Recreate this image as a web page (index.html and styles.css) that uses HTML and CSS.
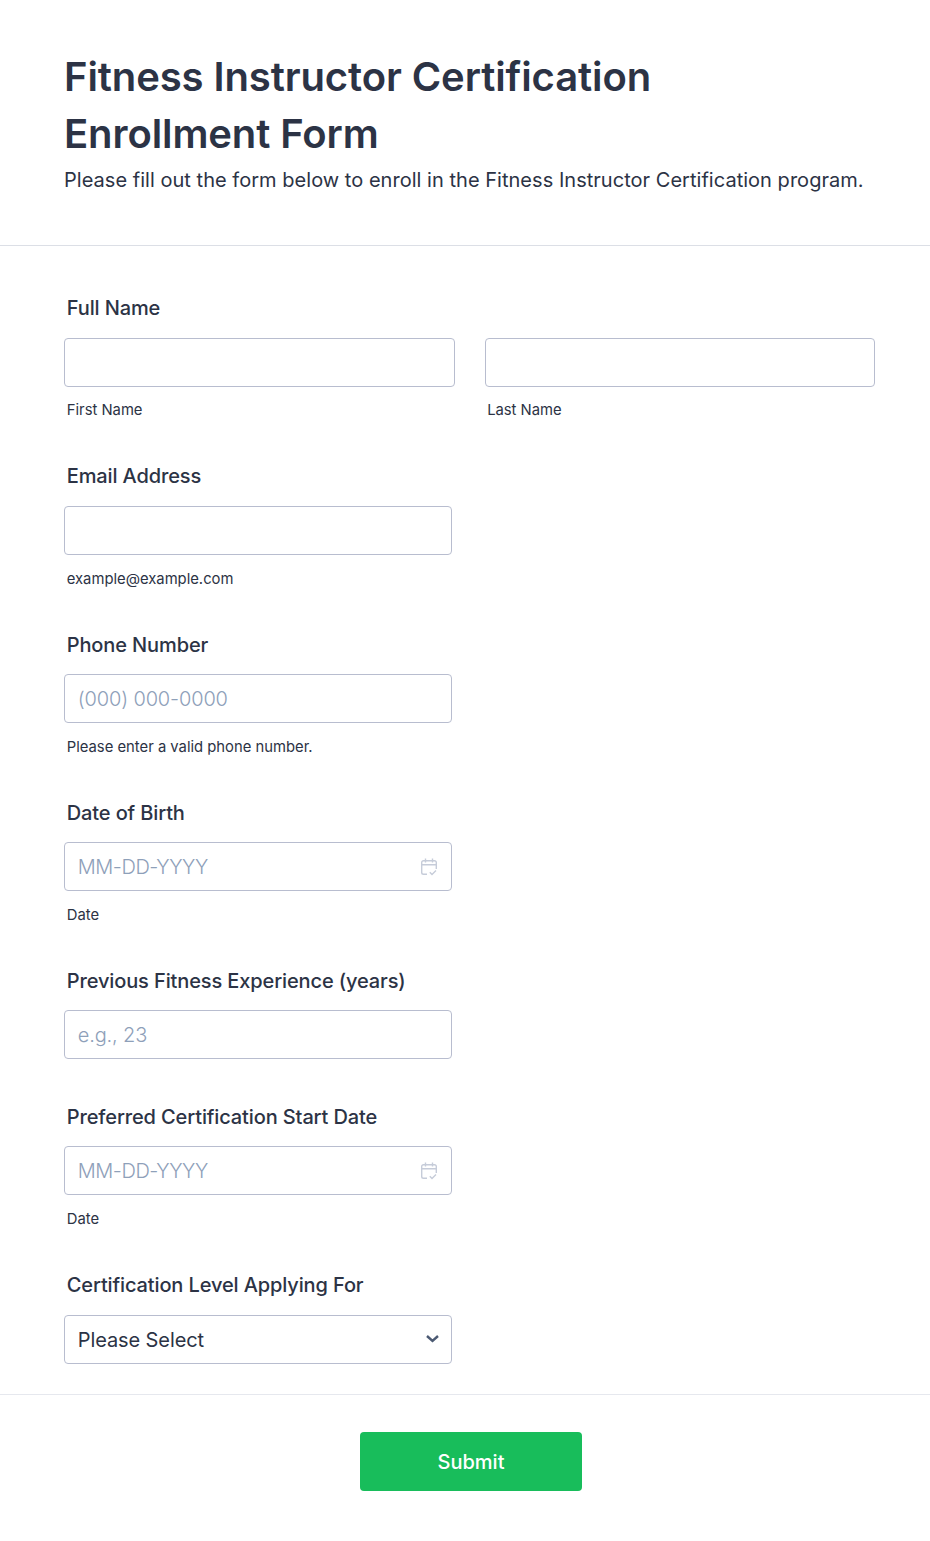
FILE: index.html
```html
<!DOCTYPE html>
<html lang="en">
<head>
  <meta charset="UTF-8">
  <title>Fitness Instructor Certification Enrollment Form</title>
  <link rel="stylesheet" href="styles.css">
</head>
<body>
  <header class="form-header">
    <h1>Fitness Instructor Certification Enrollment Form</h1>
    <p>Please fill out the form below to enroll in the Fitness Instructor Certification program.</p>
  </header>

  <form class="form-body">
    <div class="field">
      <label class="field-label">Full Name</label>
      <div class="name-row">
        <div class="name-col">
          <input class="input" type="text">
          <div class="sublabel">First Name</div>
        </div>
        <div class="name-col">
          <input class="input" type="text">
          <div class="sublabel">Last Name</div>
        </div>
      </div>
    </div>

    <div class="field">
      <label class="field-label">Email Address</label>
      <input class="input input-std" type="email">
      <div class="sublabel">example@example.com</div>
    </div>

    <div class="field">
      <label class="field-label">Phone Number</label>
      <input class="input input-std" type="tel" placeholder="(000) 000-0000">
      <div class="sublabel">Please enter a valid phone number.</div>
    </div>

    <div class="field">
      <label class="field-label">Date of Birth</label>
      <div class="date-wrap">
        <input class="input input-std date-input" type="text" placeholder="MM-DD-YYYY">
        <svg class="date-icon" viewBox="0 0 16 18" fill="none" stroke="#c6ccd9" stroke-width="1.4">
          <path d="M6 16.300H2.500A1.800 1.800 0 0 1 .7 14.500V4.500A1.800 1.800 0 0 1 2.500 2.700h11a1.800 1.800 0 0 1 1.800 1.800V11"/>
          <path d="M.7 6.800h14.600M4.500 .5v4M11.500 .5v4"/>
          <path d="M8.800 14.200l2.200 2.200 4-4"/>
        </svg>
      </div>
      <div class="sublabel">Date</div>
    </div>

    <div class="field field-nosub">
      <label class="field-label">Previous Fitness Experience (years)</label>
      <input class="input input-std" type="text" placeholder="e.g., 23">
    </div>

    <div class="field">
      <label class="field-label">Preferred Certification Start Date</label>
      <div class="date-wrap">
        <input class="input input-std date-input" type="text" placeholder="MM-DD-YYYY">
        <svg class="date-icon" viewBox="0 0 16 18" fill="none" stroke="#c6ccd9" stroke-width="1.4">
          <path d="M6 16.300H2.500A1.800 1.800 0 0 1 .7 14.500V4.500A1.800 1.800 0 0 1 2.500 2.700h11a1.800 1.800 0 0 1 1.800 1.800V11"/>
          <path d="M.7 6.800h14.600M4.500 .5v4M11.500 .5v4"/>
          <path d="M8.800 14.200l2.200 2.200 4-4"/>
        </svg>
      </div>
      <div class="sublabel">Date</div>
    </div>

    <div class="field field-last">
      <label class="field-label">Certification Level Applying For</label>
      <div class="select-box">
        <span>Please Select</span>
        <svg class="select-arrow" viewBox="0 0 13 8" fill="none" stroke="#4c5a73" stroke-width="2.400">
          <path d="M1 1l5.500 5 5.500-5"/>
        </svg>
      </div>
    </div>
  </form>

  <div class="form-footer">
    <button class="submit-btn" type="button">Submit</button>
  </div>
</body>
</html>
```

FILE: styles.css
```css
* {
  box-sizing: border-box;
}

body {
  margin: 0;
  background: #fff;
  color: #2c3345;
  font-family: Inter, "Liberation Sans", sans-serif;
}

.form-header {
  height: 246px;
  padding: 48px 64px 0;
  border-bottom: 1px solid #dcdfe6;
}

.form-header h1 {
  margin: 0;
  font-size: 40px;
  line-height: 57px;
  font-weight: 600;
  letter-spacing: -0.1px;
  max-width: 640px;
}

.form-header p {
  margin: 4px 0 0;
  font-size: 20px;
  line-height: 28px;
  letter-spacing: 0.03px;
  white-space: nowrap;
}

.form-body {
  padding: 48.2px 55px 30px 64.25px;
}

.field {
  margin-bottom: 42px;
}

.field-nosub {
  margin-bottom: 43.6px;
}

.field-last {
  margin-bottom: 0;
}

.field-label {
  display: block;
  padding-left: 2.5px;
  margin-bottom: 15.4px;
  font-size: 20px;
  line-height: 28px;
  font-weight: 500;
  letter-spacing: -0.12px;
}

.name-row {
  display: flex;
  gap: 30px;
}

.name-col {
  flex: 1;
}

.input {
  display: block;
  width: 100%;
  height: 49px;
  padding: 1px 13px 0 12.5px;
  border: 1px solid #b8bdcf;
  border-radius: 4px;
  background: #fff;
  color: #2c3345;
  font-family: inherit;
  font-size: 20px;
}

.input-std {
  width: 388px;
}

.input::placeholder {
  color: #8ea0b9;
  opacity: 1;
  font-weight: 300;
  letter-spacing: -0.15px;
}

.date-input::placeholder {
  letter-spacing: -0.45px;
}

.date-wrap {
  position: relative;
  width: 388px;
}

.date-icon {
  position: absolute;
  top: 16px;
  right: 15px;
  width: 16px;
  height: 18px;
}

.sublabel {
  margin-top: 13.8px;
  padding-left: 2.5px;
  font-size: 14.8px;
  line-height: 20px;
  color: #2c3345;
}

.select-box {
  display: flex;
  align-items: center;
  justify-content: space-between;
  width: 388px;
  height: 49px;
  padding: 0 12px 0 12.5px;
  border: 1px solid #b8bdcf;
  border-radius: 4px;
  font-size: 20px;
  letter-spacing: -0.1px;
}

.select-box span {
  padding-top: 2px;
}

.select-arrow {
  width: 13px;
  height: 8px;
}

.form-footer {
  display: flex;
  justify-content: center;
  padding: 37px 0 50px 12px;
  border-top: 1px solid #e6e8ee;
}

.submit-btn {
  width: 222px;
  height: 59px;
  padding-top: 2px;
  border: none;
  border-radius: 4px;
  background: #18bd5b;
  color: #fff;
  font-family: inherit;
  font-size: 20px;
  font-weight: 500;
}
```
